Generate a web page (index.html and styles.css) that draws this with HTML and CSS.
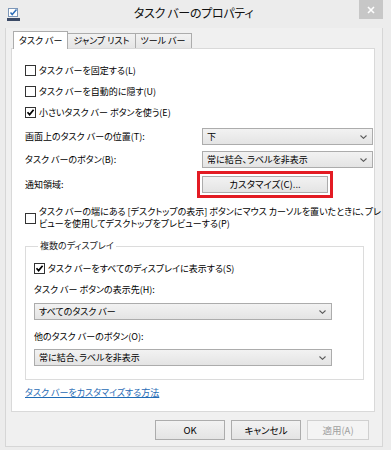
FILE: index.html
```html
<!DOCTYPE html>
<html lang="ja">
<head>
    <meta charset="UTF-8">
    <meta name="viewport" content="width=device-width, initial-scale=1.0">
    <title>タスク バーのプロパティ</title>
    <link rel="stylesheet" href="styles.css">
</head>
<body>

    <div class="window">
        <div class="titlebar">
            <svg class="app-icon" width="13" height="13" viewBox="0 0 13 13">
                <rect x="1.5" y="0.5" width="9" height="8" fill="#fff" stroke="#7d97b8"/>
                <path d="M3.5 4.5 L5.2 6.5 L9.5 1.5" fill="none" stroke="#2f6fb8" stroke-width="1.5"/>
                <rect x="0" y="10" width="13" height="3" fill="#3b4a66"/>
            </svg>
            <div class="title">タスク バーのプロパティ</div>
            <div class="close">
                <svg width="8" height="8" viewBox="0 0 8 8">
                    <path d="M1 1 L7 7 M7 1 L1 7" stroke="#fff" stroke-width="1.6"/>
                </svg>
            </div>
        </div>

        <div class="client">
            <div class="tabs">
                <div class="tab active">タスク バー</div>
                <div class="tab">ジャンプ リスト</div>
                <div class="tab">ツール バー</div>
            </div>

            <div class="panel">
                <div class="check">
                    <span class="box"></span>
                    <span>タスク バーを固定する(L)</span>
                </div>
                <div class="check">
                    <span class="box"></span>
                    <span>タスク バーを自動的に隠す(U)</span>
                </div>
                <div class="check">
                    <span class="box checked">
                        <svg width="9" height="9" viewBox="0 0 9 9"><path d="M1.5 4.3 L3.6 6.6 L7.6 1.8" fill="none" stroke="#000" stroke-width="1.7"/></svg>
                    </span>
                    <span>小さいタスク バー ボタンを使う(E)</span>
                </div>

                <div class="fields">
                    <div class="field-row">
                        <span>画面上のタスク バーの位置(T):</span>
                        <div class="combo">
                            <span>下</span>
                            <svg class="arrow" width="7" height="4" viewBox="0 0 7 4"><path d="M0.5 0.5 L3.5 3.3 L6.5 0.5" fill="none" stroke="#5a5a5a" stroke-width="1.1"/></svg>
                        </div>
                    </div>
                    <div class="field-row">
                        <span>タスク バーのボタン(B):</span>
                        <div class="combo">
                            <span>常に結合、ラベルを非表示</span>
                            <svg class="arrow" width="7" height="4" viewBox="0 0 7 4"><path d="M0.5 0.5 L3.5 3.3 L6.5 0.5" fill="none" stroke="#5a5a5a" stroke-width="1.1"/></svg>
                        </div>
                    </div>
                    <div class="field-row tall">
                        <span>通知領域:</span>
                        <div><button class="btn customize">カスタマイズ(C)...</button></div>
                    </div>
                </div>

                <div class="check multi">
                    <span class="box"></span>
                    <span class="multi-text">タスク バーの端にある [デスクトップの表示] ボタンにマウス カーソルを置いたときに、プレ<br>ビューを使用してデスクトップをプレビューする(P)</span>
                </div>

                <fieldset class="group">
                    <legend>複数のディスプレイ</legend>
                    <div class="check">
                        <span class="box checked">
                            <svg width="9" height="9" viewBox="0 0 9 9"><path d="M1.5 4.3 L3.6 6.6 L7.6 1.8" fill="none" stroke="#000" stroke-width="1.7"/></svg>
                        </span>
                        <span>タスク バーをすべてのディスプレイに表示する(S)</span>
                    </div>
                    <div class="group-label">タスク バー ボタンの表示先(H):</div>
                    <div class="combo">
                        <span>すべてのタスク バー</span>
                        <svg class="arrow" width="7" height="4" viewBox="0 0 7 4"><path d="M0.5 0.5 L3.5 3.3 L6.5 0.5" fill="none" stroke="#5a5a5a" stroke-width="1.1"/></svg>
                    </div>
                    <div class="group-label second">他のタスク バーのボタン(O):</div>
                    <div class="combo">
                        <span>常に結合、ラベルを非表示</span>
                        <svg class="arrow" width="7" height="4" viewBox="0 0 7 4"><path d="M0.5 0.5 L3.5 3.3 L6.5 0.5" fill="none" stroke="#5a5a5a" stroke-width="1.1"/></svg>
                    </div>
                </fieldset>

                <a class="help-link" href="#">タスク バーをカスタマイズする方法</a>
            </div>

            <div class="buttons">
                <button class="btn ok">OK</button>
                <button class="btn cancel">キャンセル</button>
                <button class="btn apply" disabled>適用(A)</button>
            </div>
        </div>
    </div>

</body>
</html>
```

FILE: styles.css
```css
* {
    box-sizing: border-box;
}

body {
    margin: 0;
    background: #ececec;
    font-family: "Noto Sans CJK JP", "Noto Sans", sans-serif;
    font-size: 9px;
    font-feature-settings: "palt";
    color: #000;
}

.window {
    width: 391px;
    height: 450px;
    padding: 0 8px 3px 5px;
    background: #ececec;
    display: flex;
    flex-direction: column;
}

/* title bar */
.titlebar {
    height: 28px;
    display: flex;
    align-items: flex-start;
}

.app-icon {
    margin: 8px 0 0 2px;
    flex: none;
}

.title {
    flex: 1;
    text-align: center;
    padding-left: 8px;
    font-size: 12px;
    letter-spacing: -0.3px;
    line-height: 26px;
    color: #111;
}

.close {
    width: 24px;
    height: 19px;
    background: #c7c7c7;
    display: flex;
    justify-content: center;
    align-items: center;
}

/* client area */
.client {
    flex: 1;
    background: #f0f0f0;
    border: 1px solid #d6d6d6;
    border-top: none;
    padding: 0 7px 0 5px;
}

.tabs {
    height: 20px;
    display: flex;
    align-items: flex-end;
    padding-left: 2px;
}

.tab {
    height: 15px;
    padding: 0 5px;
    line-height: 14px;
    border: 1px solid #acacac;
    border-bottom: none;
    border-left: none;
    background: linear-gradient(#f2f2f2, #e5e5e5);
}

.tab.active {
    height: 18px;
    line-height: 17px;
    margin-bottom: -1px;
    border-left: 1px solid #acacac;
    background: #fff;
    position: relative;
    z-index: 1;
}

.panel {
    height: 364px;
    background: #fff;
    border: 1px solid #d9d9d9;
    padding: 11px 1px 0 13px;
    display: flex;
    flex-direction: column;
}

/* checkboxes */
.check {
    height: 21px;
    display: flex;
    align-items: center;
    gap: 3px;
    white-space: nowrap;
}

.box {
    width: 11px;
    height: 11px;
    flex: none;
    border: 1px solid #333;
    background: #fff;
    display: flex;
    justify-content: center;
    align-items: center;
}

.check.multi {
    height: auto;
    margin-top: 9px;
    line-height: 12px;
}

/* label + control rows */
.fields {
    margin-top: 2px;
}

.field-row {
    height: 23px;
    display: grid;
    grid-template-columns: 177px 1fr;
    align-items: center;
}

.field-row.tall {
    height: 26px;
}

.combo {
    height: 17px;
    border: 1px solid #acacac;
    background: linear-gradient(#f2f2f2, #e4e4e4);
    display: flex;
    align-items: center;
    justify-content: space-between;
    padding: 0 5px 0 4px;
}

.btn {
    height: 20px;
    border: 1px solid #acacac;
    background: linear-gradient(#f2f2f2, #e4e4e4);
    font-family: inherit;
    font-size: 9.5px;
    font-feature-settings: "palt";
    color: #000;
    padding: 0;
}

.btn.customize {
    width: 126px;
    height: 17px;
    display: block;
    outline: 3px solid #e31b23;
    outline-offset: 2px;
}

/* multiple displays group */
.group {
    margin: 10px 9px 0 0;
    padding: 6px 31px 13px 8px;
    border: 1px solid #dcdcdc;
    min-width: 0;
}

.group legend {
    padding: 0 2px;
    margin-left: 4px;
    line-height: 12px;
    color: #1a1a1a;
}

.group-label {
    height: 22px;
    line-height: 22px;
}

.group-label.second {
    height: 20px;
    line-height: 20px;
    margin-top: 7px;
}

.group .combo {
    margin-top: 2px;
}

.help-link {
    margin-top: 6px;
    line-height: 14px;
    color: #1f6bb5;
    text-decoration: underline;
    align-self: flex-start;
}

/* dialog buttons */
.buttons {
    margin-top: 8px;
    display: flex;
    justify-content: flex-end;
    gap: 6px;
    padding-right: 6px;
}

.btn.ok,
.btn.cancel {
    width: 70px;
}

.btn.apply {
    width: 62px;
    border-color: #d0d0d0;
    background: #f4f4f4;
    color: #a0a0a0;
}
```
